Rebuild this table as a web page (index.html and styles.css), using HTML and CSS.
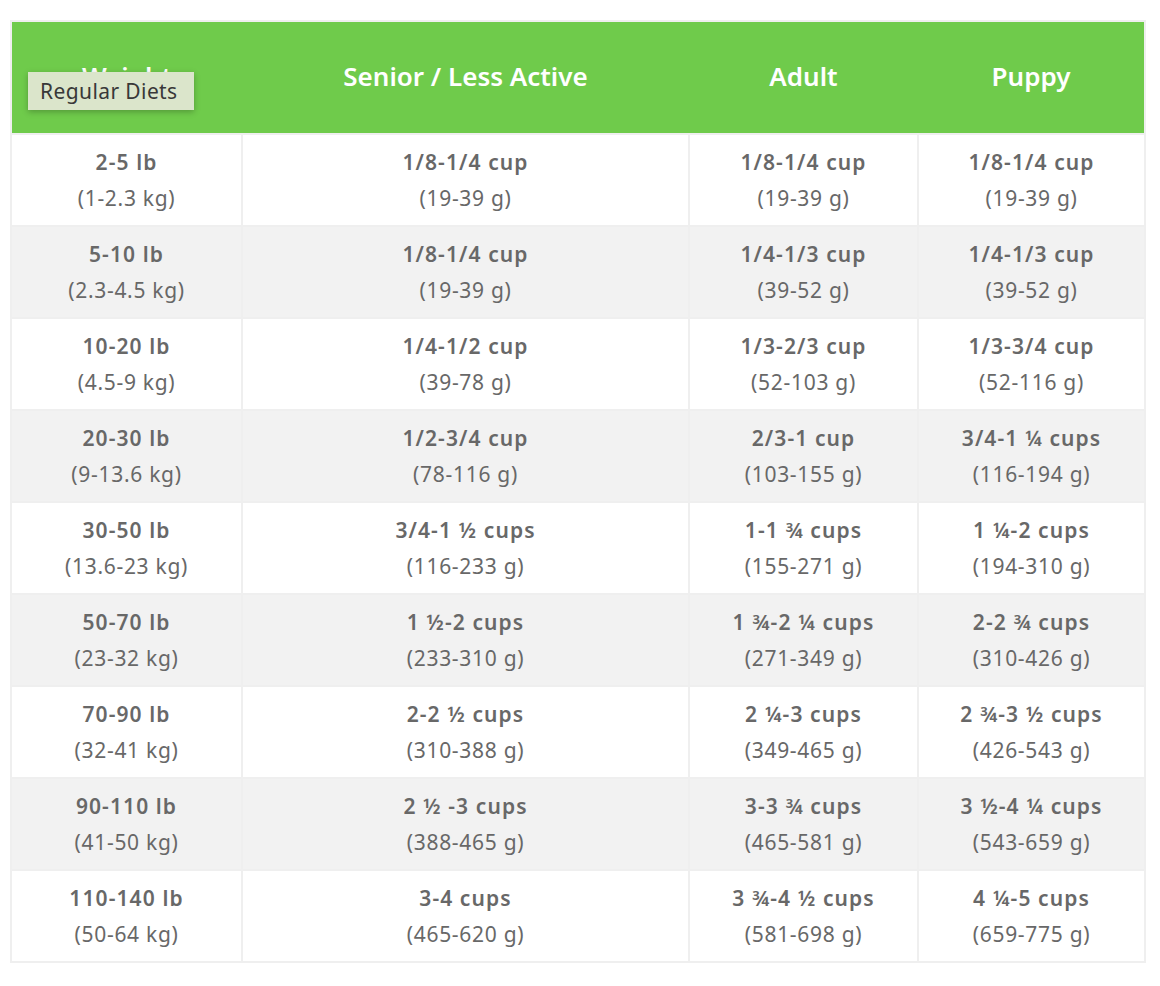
FILE: index.html
```html
<!DOCTYPE html>
<html>
<head>
<meta charset="utf-8">
<link rel="stylesheet" href="styles.css">
</head>
<body>
<div class="wrap">
<table class="chart">
<colgroup><col class="c1"><col class="c2"><col class="c3"><col class="c4"></colgroup>
<thead>
<tr><th>Weight</th><th>Senior / Less Active</th><th>Adult</th><th>Puppy</th></tr>
</thead>
<tbody>
<tr><td><b>2-5 lb</b><span>(1-2.3 kg)</span></td><td><b>1/8-1/4 cup</b><span>(19-39 g)</span></td><td><b>1/8-1/4 cup</b><span>(19-39 g)</span></td><td><b>1/8-1/4 cup</b><span>(19-39 g)</span></td></tr>
<tr><td><b>5-10 lb</b><span>(2.3-4.5 kg)</span></td><td><b>1/8-1/4 cup</b><span>(19-39 g)</span></td><td><b>1/4-1/3 cup</b><span>(39-52 g)</span></td><td><b>1/4-1/3 cup</b><span>(39-52 g)</span></td></tr>
<tr><td><b>10-20 lb</b><span>(4.5-9 kg)</span></td><td><b>1/4-1/2 cup</b><span>(39-78 g)</span></td><td><b>1/3-2/3 cup</b><span>(52-103 g)</span></td><td><b>1/3-3/4 cup</b><span>(52-116 g)</span></td></tr>
<tr><td><b>20-30 lb</b><span>(9-13.6 kg)</span></td><td><b>1/2-3/4 cup</b><span>(78-116 g)</span></td><td><b>2/3-1 cup</b><span>(103-155 g)</span></td><td><b>3/4-1 ¼ cups</b><span>(116-194 g)</span></td></tr>
<tr><td><b>30-50 lb</b><span>(13.6-23 kg)</span></td><td><b>3/4-1 ½ cups</b><span>(116-233 g)</span></td><td><b>1-1 ¾ cups</b><span>(155-271 g)</span></td><td><b>1 ¼-2 cups</b><span>(194-310 g)</span></td></tr>
<tr><td><b>50-70 lb</b><span>(23-32 kg)</span></td><td><b>1 ½-2 cups</b><span>(233-310 g)</span></td><td><b>1 ¾-2 ¼ cups</b><span>(271-349 g)</span></td><td><b>2-2 ¾ cups</b><span>(310-426 g)</span></td></tr>
<tr><td><b>70-90 lb</b><span>(32-41 kg)</span></td><td><b>2-2 ½ cups</b><span>(310-388 g)</span></td><td><b>2 ¼-3 cups</b><span>(349-465 g)</span></td><td><b>2 ¾-3 ½ cups</b><span>(426-543 g)</span></td></tr>
<tr><td><b>90-110 lb</b><span>(41-50 kg)</span></td><td><b>2 ½ -3 cups</b><span>(388-465 g)</span></td><td><b>3-3 ¾ cups</b><span>(465-581 g)</span></td><td><b>3 ½-4 ¼ cups</b><span>(543-659 g)</span></td></tr>
<tr><td><b>110-140 lb</b><span>(50-64 kg)</span></td><td><b>3-4 cups</b><span>(465-620 g)</span></td><td><b>3 ¾-4 ½ cups</b><span>(581-698 g)</span></td><td><b>4 ¼-5 cups</b><span>(659-775 g)</span></td></tr>
</tbody>
</table>
<div class="tooltip">Regular Diets</div>
</div>
</body>
</html>
```
FILE: styles.css
```css
html, body {
  margin: 0;
  padding: 0;
  background: #fff;
}
body {
  padding: 20px 10px;
  font-family: "Noto Sans", "Open Sans", sans-serif;
}
.wrap {
  position: relative;
  width: 1136px;
}
.chart {
  width: 1136px;
  border-collapse: collapse;
  table-layout: fixed;
  border: 2px solid #efefef;
}
.c1 { width: 231px; }
.c2 { width: 447px; }
.c3 { width: 229px; }
.c4 { width: 227px; }
.chart th {
  background: #6fcb4b;
  color: #fff;
  font-size: 26px;
  font-weight: 600;
  height: 107px;
  padding: 0 0 4px;
  text-align: center;
  vertical-align: middle;
  border: 0;
}
.chart td {
  border: 2px solid #efefef;
  height: 89px;
  padding: 0 0 1px;
  text-align: center;
  vertical-align: middle;
  color: #686868;
  font-size: 21px;
  line-height: 36px;
  letter-spacing: 0.7px;
}
.chart tbody tr:nth-child(even) td {
  background: #f2f2f2;
}
.chart td b {
  display: block;
  font-weight: 600;
  letter-spacing: 1.1px;
}
.chart td span {
  display: block;
  font-weight: 400;
}
.tooltip {
  position: absolute;
  left: 18px;
  top: 52px;
  width: 166px;
  height: 38px;
  box-sizing: border-box;
  background: #dbe5cb;
  color: #383838;
  font-size: 21px;
  line-height: 38px;
  padding-left: 12px;
  letter-spacing: 0.4px;
  box-shadow: 0 2px 6px rgba(0,0,0,0.25);
}
```
